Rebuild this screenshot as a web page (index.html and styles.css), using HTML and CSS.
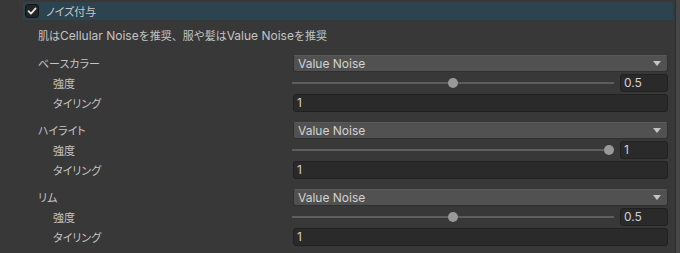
FILE: index.html
```html
<!DOCTYPE html>
<html lang="ja">
<head>
    <meta charset="UTF-8">
    <meta name="viewport" content="width=device-width, initial-scale=1.0">
    <title>ノイズ付与</title>
    <link rel="stylesheet" href="styles.css">
</head>
<body>
<div class="inspector">
    <div class="content">
        <div class="foldout">
            <span class="toggle">
                <svg width="10" height="10" viewBox="0 0 10 10"><polyline points="1.5,5.2 4,7.6 8.6,2.4" fill="none" stroke="#e8e8e8" stroke-width="1.8" stroke-linecap="round" stroke-linejoin="round"/></svg>
            </span>
            <span class="foldout-title">ノイズ付与</span>
        </div>

        <div class="props">
            <div class="hint"><span class="ja">肌は</span>Cellular Noise<span class="ja">を推奨、服や髪は</span>Value Noise<span class="ja">を推奨</span></div>

            <div class="group">
                <div class="row"><span class="label">ベースカラー</span><div class="popup">Value Noise<span class="arrow"></span></div></div>
                <div class="row sub"><span class="label">強度</span>
                    <div class="slider">
                        <div class="track"><div class="travel"><span class="thumb" style="left: 50%"></span></div></div>
                        <div class="field num">0.5</div>
                    </div>
                </div>
                <div class="row sub"><span class="label">タイリング</span><div class="field">1</div></div>
            </div>

            <div class="group">
                <div class="row"><span class="label">ハイライト</span><div class="popup">Value Noise<span class="arrow"></span></div></div>
                <div class="row sub"><span class="label">強度</span>
                    <div class="slider">
                        <div class="track"><div class="travel"><span class="thumb" style="left: 100%"></span></div></div>
                        <div class="field num">1</div>
                    </div>
                </div>
                <div class="row sub"><span class="label">タイリング</span><div class="field">1</div></div>
            </div>

            <div class="group">
                <div class="row"><span class="label">リム</span><div class="popup">Value Noise<span class="arrow"></span></div></div>
                <div class="row sub"><span class="label">強度</span>
                    <div class="slider">
                        <div class="track"><div class="travel"><span class="thumb" style="left: 50%"></span></div></div>
                        <div class="field num">0.5</div>
                    </div>
                </div>
                <div class="row sub"><span class="label">タイリング</span><div class="field">1</div></div>
            </div>
        </div>
    </div>
    <div class="scrollbar"></div>
</div>
</body>
</html>
```

FILE: styles.css
```css
* {
    margin: 0;
    padding: 0;
    box-sizing: border-box;
}
body {
    background: #383838;
    color: #c4c4c4;
    font-family: Inter, "Noto Sans CJK JP", sans-serif;
    font-size: 12px;
    overflow: hidden;
}
.inspector {
    display: flex;
    height: 253px;
}
.content {
    flex: 1;
    padding-top: 2px;
}
.scrollbar {
    width: 5px;
    background: #474747;
    border-left: 1px solid #2e2e2e;
}
.foldout {
    display: flex;
    align-items: center;
    height: 18px;
    margin: 0 2px 0 23px;
    background: #2c4350;
}
.toggle {
    display: flex;
    align-items: center;
    justify-content: center;
    width: 14px;
    height: 14px;
    margin-left: 2px;
    background: #242424;
    border: 1px solid #151515;
    border-radius: 3px;
}
.foldout-title {
    margin-left: 7px;
    color: #c8c8c8;
    font-size: 11px;
    font-feature-settings: "palt";
}
.props {
    display: flex;
    flex-direction: column;
    gap: 7px;
    padding: 6px 7px 0 38px;
}
.hint {
    height: 20px;
    line-height: 20px;
}
.hint .ja {
    font-size: 11px;
}
.group {
    display: flex;
    flex-direction: column;
}
.row {
    display: grid;
    grid-template-columns: 255px 1fr;
    align-items: center;
    height: 20px;
}
.label {
    font-size: 11px;
    font-feature-settings: "palt";
}
.row.sub .label {
    padding-left: 15px;
}
.popup {
    position: relative;
    height: 17px;
    line-height: 15px;
    padding-left: 4px;
    background: #515151;
    border: 1px solid #303030;
    border-top-color: #5a5a5a;
    border-radius: 3px;
    color: #d2d2d2;
}
.arrow {
    position: absolute;
    right: 6px;
    top: 5px;
    width: 0;
    height: 0;
    border-left: 4px solid transparent;
    border-right: 4px solid transparent;
    border-top: 5px solid #c4c4c4;
}
.field {
    height: 18px;
    line-height: 16px;
    padding-left: 3px;
    background: #2a2a2a;
    border: 1px solid #212121;
    border-radius: 3px;
    color: #d2d2d2;
}
.slider {
    display: flex;
    align-items: center;
    gap: 6px;
    margin-left: -1px;
}
.track {
    flex: 1;
    height: 2px;
    background: #5e5e5e;
}
.travel {
    position: relative;
    height: 2px;
    margin: 0 5px;
}
.thumb {
    position: absolute;
    top: -4px;
    width: 10px;
    height: 10px;
    margin-left: -5px;
    border-radius: 50%;
    background: #999999;
}
.field.num {
    width: 48px;
}
```
